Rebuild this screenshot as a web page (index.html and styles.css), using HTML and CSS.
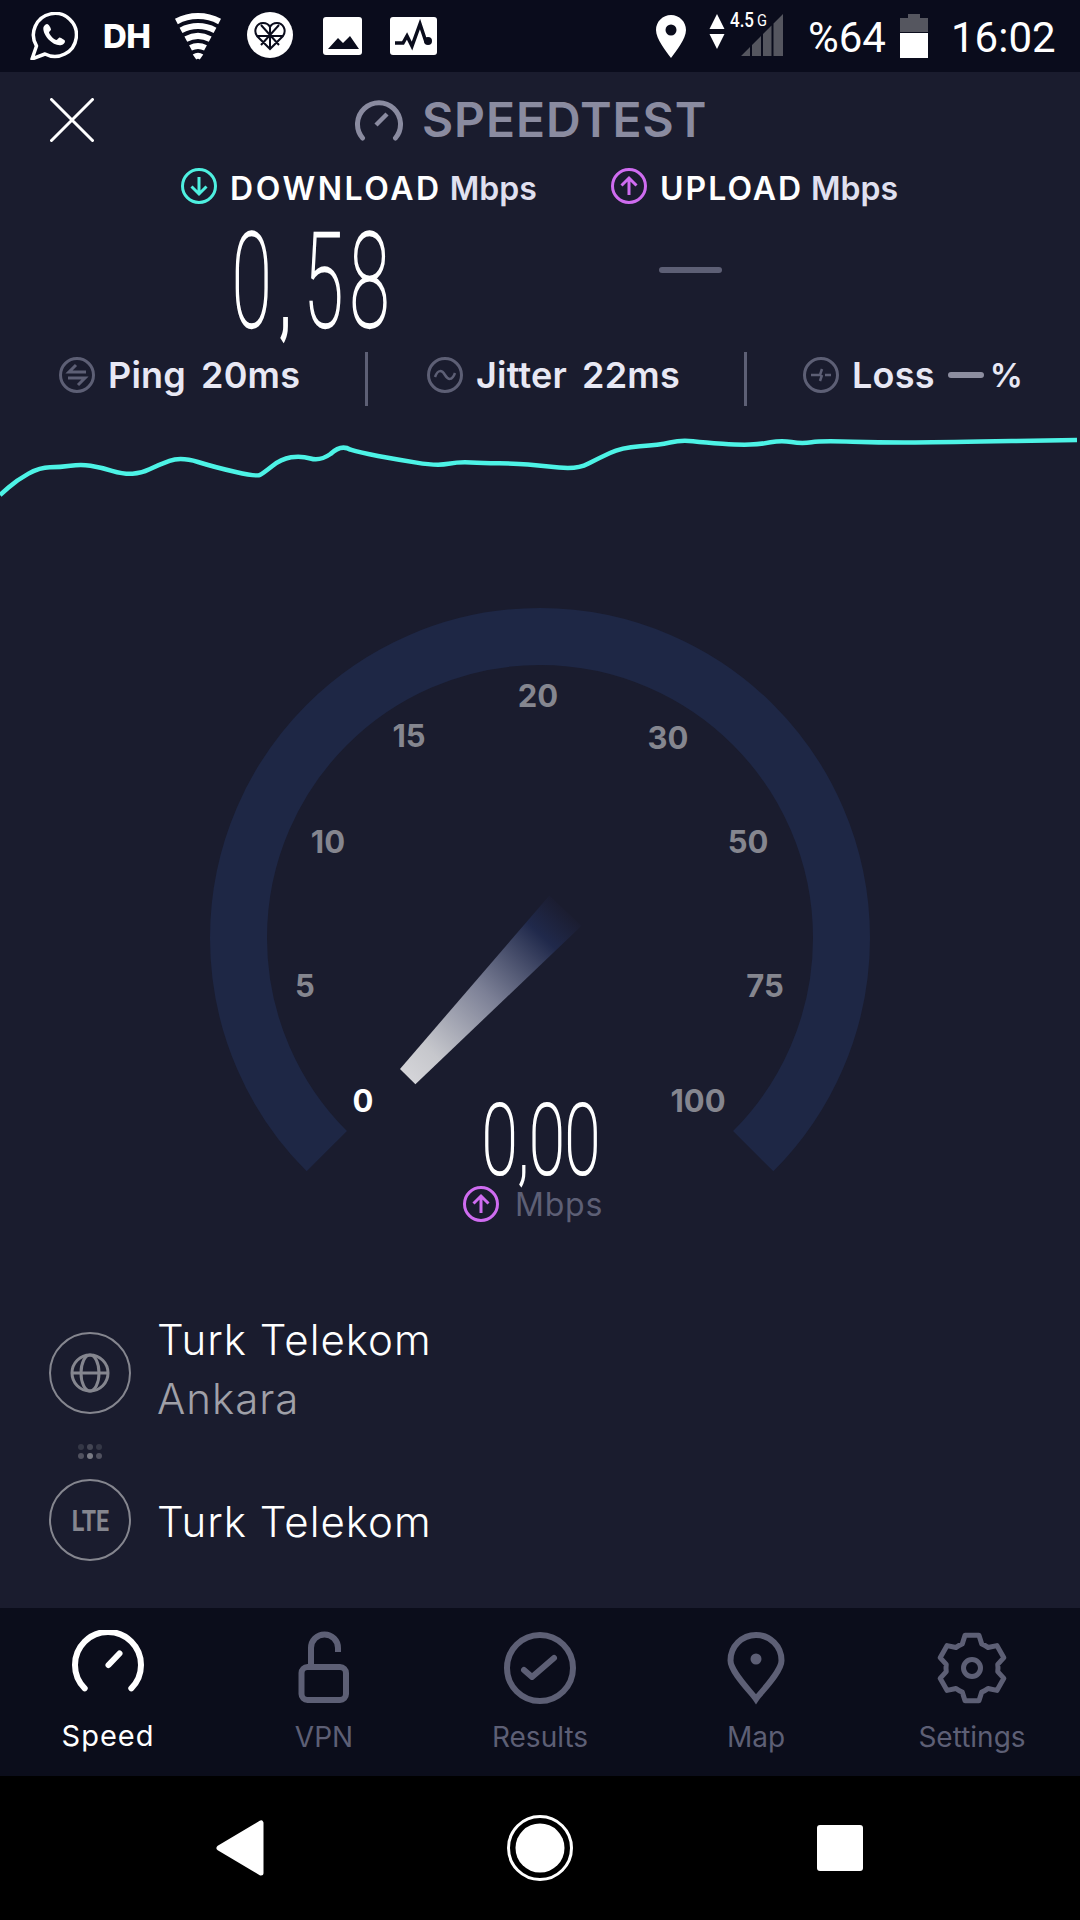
FILE: index.html
```html
<!DOCTYPE html>
<html lang="en">
<head>
    <meta charset="UTF-8">
    <meta name="viewport" content="width=device-width, initial-scale=1.0">
    <title>Speedtest</title>
    <link rel="stylesheet" href="styles.css">
</head>
<body>
<div class="phone">
    <div class="status-bar">
        <svg class="sb-whatsapp" viewBox="0 0 48 48" width="48" height="48">
            <path d="M2 47 L6.5 34 A21.5 21.5 0 1 1 15 42 Z" fill="none" stroke="#fff" stroke-width="3.5" stroke-linejoin="round"/>
            <path d="M17 12c-1 0-2.5 1-3.5 3-.8 3 1 8 5 12.5 4 4 9 6.5 13 5.5 2-.5 3.5-2 3.5-4 0-1-4.5-3.5-5.5-3.5s-2 2.5-3 2.5c-2 0-6.5-4.5-7.5-7.5 0-1 2-2 2-3s-2-5.5-4-5.5z" fill="#fff"/>
        </svg>
        <span class="sb-dh">DH</span>
        <svg class="sb-wifi" viewBox="0 0 48 48" width="48" height="48" fill="none" stroke="#fff" stroke-width="6">
            <path d="M2.4 9.5 A46 46 0 0 1 45.6 9.5"/>
            <path d="M7 18.3 A36 36 0 0 1 41 18.3"/>
            <path d="M11.8 27.1 A26 26 0 0 1 36.2 27.1"/>
            <path d="M16.5 35.9 A16 16 0 0 1 31.5 35.9"/>
            <path d="M20.5 45 A6 6 0 0 1 27.5 45"/>
        </svg>
        <svg class="sb-heart" viewBox="0 0 46 46" width="46" height="46">
            <circle cx="23" cy="23" r="23" fill="#fff"/>
            <path d="M23 37 L10 24 C6 18 10 11 16 11 C19 11 22 13 23 15 C24 13 27 11 30 11 C36 11 40 18 36 24 Z M23 15 V37 M10 24 H36 M14 13 L32 33 M32 13 L14 33" fill="none" stroke="#0a0c1c" stroke-width="2"/>
        </svg>
        <svg class="sb-image" viewBox="0 0 39 38" width="39" height="38">
            <rect width="39" height="38" rx="3" fill="#fff"/>
            <path d="M5 32 L15 21 L20 26 L27 19 L36 32 Z" fill="#0a0c1c"/>
        </svg>
        <svg class="sb-pulse" viewBox="0 0 47 38" width="47" height="38">
            <rect width="47" height="38" rx="3" fill="#fff"/>
            <path d="M5 26 H13 L17 19 L22 29 L30 7 L36 25" fill="none" stroke="#0a0c1c" stroke-width="3.5"/>
            <circle cx="38" cy="24" r="4" fill="#0a0c1c"/>
        </svg>
        <svg class="sb-pin" viewBox="0 0 30 43" width="30" height="43">
            <path d="M15 0 C6.7 0 0 6.7 0 15 C0 24 10 36 15 43 C20 36 30 24 30 15 C30 6.7 23.3 0 15 0 Z" fill="#fff"/>
            <circle cx="15" cy="15" r="5.5" fill="#0a0c1c"/>
        </svg>
        <svg class="sb-net" viewBox="0 -6 74 52" width="74" height="52">
            <path d="M8 2 L15.5 17 H0.5 Z M0.5 22 H15.5 L8 37 Z" fill="#fff"/>
            <path d="M32 44 L41 35 V44 Z M43 33 L52 24 V44 H43 Z M54 22 L62.5 13.5 V44 H54 Z M64.5 11.5 L74 2 V44 H64.5 Z" fill="#55565f"/>
            <text class="sb-net-text" x="21" y="15" textLength="24" lengthAdjust="spacingAndGlyphs">4.5</text>
            <text class="sb-net-g" x="48" y="14" textLength="10" lengthAdjust="spacingAndGlyphs">G</text>
        </svg>
        <span class="sb-text sb-percent">%64</span>
        <svg class="sb-battery" viewBox="0 0 28 44" width="28" height="44">
            <path d="M8 0 H20 V4 H28 V18 H0 V4 H8 Z" fill="#55565f"/>
            <rect y="19" width="28" height="25" fill="#fff"/>
        </svg>
        <span class="sb-text sb-time">16:02</span>
    </div>

    <div class="main">
        <div class="top-bar">
            <svg class="close-icon" viewBox="0 0 44 44" width="44" height="44" fill="none" stroke="#fff" stroke-width="3" stroke-linecap="round">
                <path d="M1.5 1.5 L42.5 42.5 M42.5 1.5 L1.5 42.5"/>
            </svg>
            <div class="brand">
                <svg viewBox="0 0 48 42" width="48" height="42" fill="none" stroke="#8a8ba0" stroke-width="5">
                    <path d="M7.5 39 A21.5 21.5 0 1 1 40.5 39" stroke-linecap="round"/>
                    <path d="M21 26 L32 15" stroke-width="4.5"/>
                </svg>
                <span>SPEEDTEST</span>
            </div>
        </div>

        <div class="rates">
            <div class="rate">
                <div class="rate-head">
                    <svg viewBox="0 0 36 36" width="36" height="36" fill="none" stroke="#4ef0e0" stroke-width="3">
                        <circle cx="18" cy="18" r="16.5"/>
                        <path d="M18 9 V26 M10.5 18.5 L18 26 L25.5 18.5"/>
                    </svg>
                    <span class="rate-name rate-name-wide">DOWNLOAD</span>
                    <span class="rate-unit">Mbps</span>
                </div>
                <div class="rate-value">0<span class="comma">,</span>58</div>
            </div>
            <div class="rate">
                <div class="rate-head">
                    <svg viewBox="0 0 36 36" width="36" height="36" fill="none" stroke="#cf6cf0" stroke-width="3">
                        <circle cx="18" cy="18" r="16.5"/>
                        <path d="M18 27 V10 M10.5 17.5 L18 10 L25.5 17.5"/>
                    </svg>
                    <span class="rate-name">UPLOAD</span>
                    <span class="rate-unit">Mbps</span>
                </div>
                <div class="rate-dash"></div>
            </div>
        </div>

        <div class="stats">
            <div class="stat">
                <svg viewBox="0 0 36 36" width="36" height="36" fill="none" stroke="#5d5f75" stroke-width="3">
                    <circle cx="18" cy="18" r="16.5"/>
                    <path d="M27 15 H10 L17 8 M9 21 H26 L19 28"/>
                </svg>
                <span class="stat-name">Ping</span>
                <span class="stat-val">20ms</span>
            </div>
            <div class="stat-divider"></div>
            <div class="stat">
                <svg viewBox="0 0 36 36" width="36" height="36" fill="none" stroke="#5d5f75" stroke-width="3">
                    <circle cx="18" cy="18" r="16.5"/>
                    <path d="M8 20 C11 12 15 13 18 18 C21 23 25 24 28 16" stroke-width="2.5"/>
                </svg>
                <span class="stat-name">Jitter</span>
                <span class="stat-val">22ms</span>
            </div>
            <div class="stat-divider"></div>
            <div class="stat stat-loss">
                <svg viewBox="0 0 36 36" width="36" height="36" fill="none" stroke="#5d5f75" stroke-width="3">
                    <circle cx="18" cy="18" r="16.5"/>
                    <path d="M8 18 H13 L17 18 L19 12 M17 24 L19 18 M22 18 H28" stroke-width="2.5"/>
                </svg>
                <span class="stat-name">Loss</span>
                <span class="loss-dash"></span>
                <span class="stat-val">%</span>
            </div>
        </div>

        <svg class="spark" viewBox="0 430 1080 72" width="1080" height="72" fill="none">
            <path d="M0 495 L8.5 487.5 Q17 480 28.5 473.6 Q40 467.3 50 467.3 Q60 467.3 70.5 465.8 Q81 464.3 90.5 465.8 Q100 467.3 112 470.8 Q124 474.3 132.5 473.8 Q141 473.3 149.5 469.2 Q158 465 169.5 460.8 Q181 456.7 198 462 Q215 467.3 235.8 472 Q256.5 476.7 259.8 475 Q263 473.3 272 466.2 Q281 459 291 457.3 Q301 455.7 310.5 458.5 Q320 461.3 330.5 454 Q341 444 350.5 449.7 Q360 452.7 378 456 Q396 459.3 416.5 462.6 Q437 466 448.5 463.8 Q460 461.7 471 462.5 Q482 463.3 499 463.3 Q516.5 463.3 528 464.5 Q540 465.7 559 467.5 Q578 469.3 588 463.8 Q598.5 458.3 610 453 Q621 447.7 640 446.3 Q659 445 670 442.5 Q681 440 693 441.3 Q705 442.7 722.5 443.8 Q740 445 750 444.6 Q760 444.3 770.5 442.3 Q781 440.3 791.5 442 Q802 443.7 811.5 442.2 Q821 440.7 852.5 441.7 Q884 442.7 915 442.5 Q946 442.3 1011.5 441.1 L1077 440" stroke="#4df3e6" stroke-width="4.5" stroke-linejoin="round"/>
        </svg>

        <svg class="gauge" viewBox="0 590 1080 640" width="1080" height="640" fill="none">
            <defs>
                <linearGradient id="needleFill" gradientUnits="userSpaceOnUse" x1="408" y1="1077" x2="565.5" y2="911">
                    <stop offset="0" stop-color="#d4d4d8"/>
                    <stop offset="0.15" stop-color="#c6c7cc"/>
                    <stop offset="0.5" stop-color="#7c8096"/>
                    <stop offset="0.85" stop-color="#20294b"/>
                    <stop offset="1" stop-color="#1b1d31"/>
                </linearGradient>
            </defs>
            <path d="M326.8 1151.2 A301.5 301.5 0 1 1 753.2 1151.2" stroke="#1e2745" stroke-width="57"/>
            <path d="M400 1068.9 L415.4 1084.2 L581.5 925.8 L549.4 895.6 Z" fill="url(#needleFill)"/>
            <text class="tick" x="538" y="707">20</text>
            <text class="tick" x="409" y="747">15</text>
            <text class="tick" x="668" y="749">30</text>
            <text class="tick" x="328" y="853">10</text>
            <text class="tick" x="748" y="853">50</text>
            <text class="tick" x="305" y="997">5</text>
            <text class="tick" x="765" y="997">75</text>
            <text class="tick tick-on" x="363" y="1112">0</text>
            <text class="tick" x="698" y="1112">100</text>
            <text class="gauge-value" x="482" y="1174" textLength="118" lengthAdjust="spacingAndGlyphs">0,00</text>
            <g stroke="#cf6cf0" stroke-width="3">
                <circle cx="481" cy="1204" r="16.5"/>
                <path d="M481 1213 V1196 M473.5 1203.5 L481 1196 L488.5 1203.5"/>
            </g>
            <text class="gauge-unit" x="515" y="1216">Mbps</text>
        </svg>

        <div class="servers">
            <div class="server-row">
                <div class="server-badge">
                    <svg viewBox="0 0 40 40" width="40" height="40" fill="none" stroke="#85868f" stroke-width="3">
                        <circle cx="20" cy="20" r="18"/>
                        <ellipse cx="20" cy="20" rx="9" ry="18"/>
                        <path d="M2 20 H38"/>
                    </svg>
                </div>
                <div class="server-text server-text-double">
                    <div class="server-name">Turk Telekom</div>
                    <div class="server-city">Ankara</div>
                </div>
            </div>
            <svg class="server-dots" viewBox="0 0 80 18" width="80" height="18" fill="#85868f">
                <circle cx="31" cy="3" r="3" opacity="0.25"/>
                <circle cx="40" cy="3" r="3" opacity="0.4"/>
                <circle cx="49" cy="3" r="3" opacity="0.25"/>
                <circle cx="31" cy="12" r="3" opacity="0.5"/>
                <circle cx="40" cy="12" r="3" opacity="0.9"/>
                <circle cx="49" cy="12" r="3" opacity="0.5"/>
            </svg>
            <div class="server-row">
                <div class="server-badge">
                    <span class="lte">LTE</span>
                </div>
                <div class="server-text server-text-single">
                    <div class="server-name">Turk Telekom</div>
                </div>
            </div>
        </div>
    </div>

    <div class="tab-bar">
        <div class="tab active">
            <svg viewBox="0 0 80 76" width="80" height="76" fill="none" stroke="currentColor" stroke-width="6" stroke-linecap="round">
                <path d="M16.7 58.3 A33 33 0 1 1 63.3 58.3"/>
                <path d="M40.5 35 L51.5 23.5"/>
            </svg>
            <span>Speed</span>
        </div>
        <div class="tab">
            <svg viewBox="0 0 80 76" width="80" height="76" fill="none" stroke="currentColor" stroke-width="6">
                <rect x="17.5" y="37" width="44.5" height="33" rx="6"/>
                <path d="M27 37 V18 A13.5 13.5 0 0 1 54 18 V22"/>
            </svg>
            <span>VPN</span>
        </div>
        <div class="tab">
            <svg viewBox="0 0 80 76" width="80" height="76" fill="none" stroke="currentColor" stroke-width="6" stroke-linecap="round">
                <circle cx="40" cy="38" r="33"/>
                <path d="M24 40 L32 47 L54 28" stroke-linejoin="round"/>
            </svg>
            <span>Results</span>
        </div>
        <div class="tab">
            <svg viewBox="0 0 80 76" width="80" height="76" fill="none" stroke="currentColor" stroke-width="6">
                <path d="M40 69 C36 63 14.5 42 14.5 30.5 A25.5 25.5 0 0 1 65.5 30.5 C65.5 42 44 63 40 69 Z"/>
                <circle cx="40" cy="29" r="5.5" fill="currentColor" stroke="none"/>
            </svg>
            <span>Map</span>
        </div>
        <div class="tab">
            <svg viewBox="0 0 80 76" width="80" height="76" fill="none" stroke="currentColor" stroke-width="5" stroke-linejoin="round">
                <path d="M30.26 13.89 L33.03 5.23 L46.97 5.23 L49.74 13.89 A26 26 0 0 1 56.01 17.51 L64.89 15.58 L71.86 27.65 L65.75 34.38 A26 26 0 0 1 65.75 41.62 L71.86 48.35 L64.89 60.42 L56.01 58.49 A26 26 0 0 1 49.74 62.11 L46.97 70.77 L33.03 70.77 L30.26 62.11 A26 26 0 0 1 23.99 58.49 L15.11 60.42 L8.14 48.35 L14.25 41.62 A26 26 0 0 1 14.25 34.38 L8.14 27.65 L15.11 15.58 L23.99 17.51 A26 26 0 0 1 30.26 13.89 Z"/>
                <circle cx="40" cy="38" r="8.5"/>
            </svg>
            <span>Settings</span>
        </div>
    </div>

    <div class="nav-bar">
        <svg viewBox="0 0 48 56" width="48" height="56">
            <path d="M45 3 V53 L3 28 Z" fill="#fff" stroke="#fff" stroke-width="5" stroke-linejoin="round"/>
        </svg>
        <svg viewBox="0 0 66 66" width="66" height="66">
            <circle cx="33" cy="33" r="31.5" fill="none" stroke="#fff" stroke-width="3"/>
            <circle cx="33" cy="33" r="24.5" fill="#fff"/>
        </svg>
        <div class="nav-square"></div>
    </div>
</div>
</body>
</html>
```

FILE: styles.css
```css
* {
    margin: 0;
    padding: 0;
    box-sizing: border-box;
}

body {
    font-family: Inter, 'Liberation Sans', sans-serif;
    background: #000;
    color: #fff;
}

svg {
    display: block;
    flex-shrink: 0;
}

.phone {
    width: 1080px;
    height: 1920px;
    display: flex;
    flex-direction: column;
    overflow: hidden;
}

/* status bar */
.status-bar {
    height: 72px;
    background: #0a0c1c;
    display: flex;
    align-items: center;
    padding-left: 30px;
}

.sb-dh {
    font-size: 33px;
    font-weight: 800;
    width: 46px;
    margin-left: 25px;
    letter-spacing: -0.5px;
}

.sb-wifi { margin-left: 25px; }
.sb-heart { margin-left: 25px; margin-top: -2px; }
.sb-image { margin-left: 30px; }
.sb-pulse { margin-left: 28px; }
.sb-pin { margin-left: 219px; }
.sb-net { margin-left: 23px; margin-top: -8px; }

.sb-net-text, .sb-net-g {
    font-family: Roboto, sans-serif;
    fill: #fff;
}

.sb-net-text { font-size: 20px; font-weight: 500; }
.sb-net-g { font-size: 17px; }

.sb-text {
    font-family: Roboto, sans-serif;
    font-size: 42px;
    line-height: 72px;
    padding-top: 3px;
}

.sb-percent { margin-left: 25px; width: 80px; }
.sb-battery { margin-left: 12px; }
.sb-time { margin-left: 23px; }

/* main area */
.main {
    flex: 1;
    background: #1a1c2e;
}

.top-bar {
    display: flex;
    align-items: center;
    height: 96px;
    padding-left: 50px;
}

.brand {
    display: flex;
    align-items: center;
    gap: 19px;
    margin-left: 261px;
    font-size: 48px;
    font-weight: 600;
    letter-spacing: 0.9px;
    color: #8a8ba0;
    line-height: 40px;
}

.rates {
    display: grid;
    grid-template-columns: 430px 1fr;
    padding-left: 181px;
}

.rate-head {
    display: flex;
    align-items: center;
    gap: 13px;
    height: 36px;
    font-size: 32px;
    font-weight: 600;
    line-height: 41px;
}

.rate-name { letter-spacing: 2px; padding-top: 4px; }
.rate-name-wide { letter-spacing: 2.6px; }
.rate-unit { color: #e0e0f0; margin-left: -5px; padding-top: 4px; }

.rate-value {
    margin: 20px 0 0 51px;
    height: 116px;
    font-family: Roboto, sans-serif;
    font-weight: 100;
    font-size: 131px;
    line-height: 116px;
    letter-spacing: 12px;
    white-space: nowrap;
    -webkit-text-stroke: 2.4px #fff;
    transform: scaleX(0.55);
    transform-origin: left top;
}

.comma {
    font-size: 95px;
    -webkit-text-stroke: 6px #fff;
    margin: 0 13px 0 4px;
}

.rate-dash {
    width: 63px;
    height: 6px;
    margin: 63px 0 0 48px;
    border-radius: 3px;
    background: #5d5f75;
}

.stats {
    display: grid;
    grid-template-columns: 365px 3px 376px 3px 1fr;
    height: 54px;
    margin-top: 12px;
}

.stat {
    display: flex;
    align-items: center;
    gap: 13px;
    padding: 0 0 8px 59px;
    font-size: 36px;
    font-weight: 600;
    letter-spacing: 0.2px;
    color: #e8e8f4;
}

.stat-loss { padding-left: 56px; }
.stat-val { margin-left: 2px; }

.stat-divider { background: #5d5f75; }

.loss-dash {
    width: 36px;
    height: 6px;
    border-radius: 3px;
    background: #8d8ea0;
}

.loss-dash + .stat-val { margin-left: -7px; font-size: 33px; }

.spark { margin-top: 24px; }

.gauge { margin-top: 88px; }

.tick {
    font-family: Inter, sans-serif;
    font-size: 31px;
    font-weight: 700;
    fill: #85868f;
    text-anchor: middle;
}

.tick-on { fill: #fff; }

.gauge-value {
    font-family: Roboto, sans-serif;
    font-weight: 100;
    font-size: 98px;
    fill: #fff;
    stroke: #fff;
    stroke-width: 2.2px;
}

.gauge-unit {
    font-family: Inter, sans-serif;
    font-size: 32px;
    letter-spacing: 0.8px;
    fill: #5d5f75;
}

/* servers */
.servers {
    padding-left: 49px;
    margin-top: 84px;
}

.server-row {
    display: flex;
    align-items: center;
    gap: 26px;
}

.server-badge {
    width: 82px;
    height: 82px;
    border: 2px solid #85868f;
    border-radius: 50%;
    display: flex;
    align-items: center;
    justify-content: center;
}

.server-text {
    font-size: 42px;
    font-weight: 300;
    letter-spacing: 1px;
    line-height: 59px;
}

.server-text-double { margin: -4px 0 4px; }
.server-text-single { margin-top: 2px; }

.server-city { color: #a0a0a8; }

.server-dots {
    margin: 12px 0 17px 1px;
}

.lte {
    font-family: Roboto, sans-serif;
    font-size: 29px;
    font-weight: 700;
    line-height: 1;
    padding-top: 2px;
    color: #85868f;
    transform: scaleX(0.8);
}

/* bottom tabs */
.tab-bar {
    height: 168px;
    background: #0b0d1b;
    display: grid;
    grid-template-columns: repeat(5, 1fr);
    padding-top: 22px;
}

.tab {
    display: flex;
    flex-direction: column;
    align-items: center;
    gap: 14px;
    color: #5d5f75;
    font-size: 28px;
}

.tab.active {
    gap: 12px;
    color: #fff;
    font-size: 29px;
    letter-spacing: 1px;
}

.nav-bar {
    height: 144px;
    background: #000;
    display: grid;
    grid-template-columns: repeat(3, 300px);
    justify-content: center;
    justify-items: center;
    align-items: center;
}

.nav-square {
    width: 46px;
    height: 46px;
    border-radius: 3px;
    background: #fff;
}
```
